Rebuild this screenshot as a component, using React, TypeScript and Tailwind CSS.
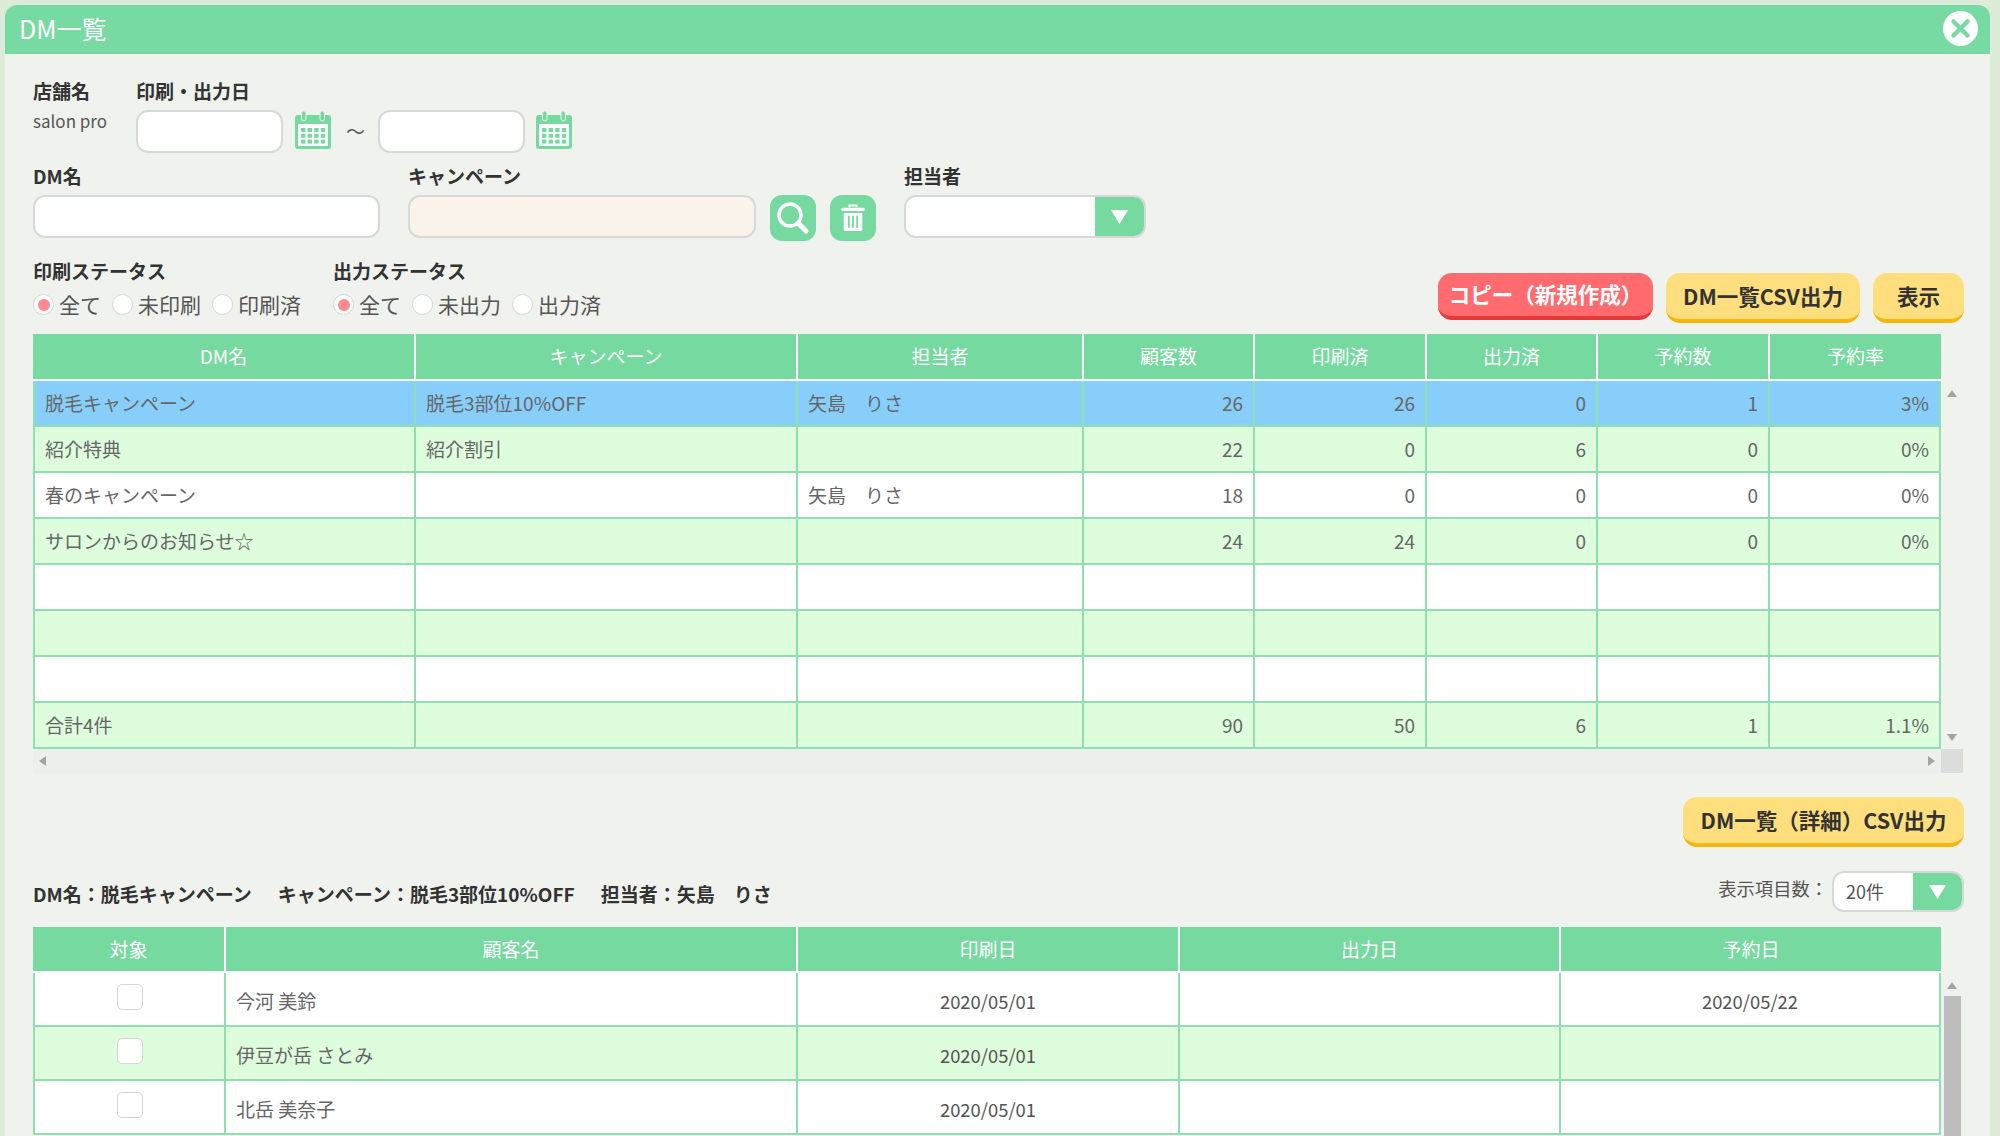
import React from "react";

const font = { fontFamily: '"Noto Sans CJK JP", "Noto Sans", sans-serif' };

function CalendarIcon() {
  const cells = [];
  for (let r = 0; r < 3; r++) for (let c = 0; c < 4; c++) cells.push(<rect key={`${r}-${c}`} x={8 + c * 6.6} y={18 + r * 5.8} width="4.4" height="4" fill="#76d9a0" />);
  return (
    <svg width="40" height="40" viewBox="0 0 40 40" className="shrink-0">
      <path d="M5 5h30a3 3 0 0 1 3 3v28a3 3 0 0 1-3 3H5a3 3 0 0 1-3-3V8a3 3 0 0 1 3-3z" fill="#76d9a0" />
      <rect x="5" y="14" width="30" height="22" rx="1" fill="#fff" />
      {cells}
      <rect x="8.5" y="1" width="4.5" height="10" rx="2.2" fill="#76d9a0" stroke="#eff2ed" strokeWidth="1" />
      <rect x="27" y="1" width="4.5" height="10" rx="2.2" fill="#76d9a0" stroke="#eff2ed" strokeWidth="1" />
    </svg>
  );
}

function Arrow() {
  return (
    <div className="flex h-full w-[49px] shrink-0 items-center justify-center bg-[#76d9a0]">
      <svg width="17" height="14" viewBox="0 0 17 14"><path d="M0 0h17L8.5 14z" fill="#fff" /></svg>
    </div>
  );
}

function Radio({ label, on }: { label: string; on?: boolean }) {
  return (
    <div className="flex items-center gap-[5px]">
      <span className="flex h-[21px] w-[21px] items-center justify-center rounded-full border border-[#d5d5d5] bg-white">
        {on && <span className="h-[12px] w-[12px] rounded-full bg-[#ff8a90]" />}
      </span>
      <span className="text-[21px] leading-none text-[#555]">{label}</span>
    </div>
  );
}

function Label({ children }: { children: React.ReactNode }) {
  return <div className="text-[19px] font-bold leading-[24px] text-[#333]">{children}</div>;
}

function YellowButton({ children, className = "" }: { children: React.ReactNode; className?: string }) {
  return (
    <button className={`flex items-center justify-center rounded-[14px] border-b-[4px] border-[#f5b60c] bg-[#ffde7d] text-[21.5px] font-bold text-[#333] ${className}`}>
      {children}
    </button>
  );
}

const t1Cols = "grid-cols-[383px_382px_286px_171px_172px_171px_172px_171px]";
const t2Cols = "grid-cols-[193px_572px_382px_381px_380px]";

const t1Rows: [string, string, string, string, string, string, string, string][] = [
  ["脱毛キャンペーン", "脱毛3部位10%OFF", "矢島　りさ", "26", "26", "0", "1", "3%"],
  ["紹介特典", "紹介割引", "", "22", "0", "6", "0", "0%"],
  ["春のキャンペーン", "", "矢島　りさ", "18", "0", "0", "0", "0%"],
  ["サロンからのお知らせ☆", "", "", "24", "24", "0", "0", "0%"],
  ["", "", "", "", "", "", "", ""],
  ["", "", "", "", "", "", "", ""],
  ["", "", "", "", "", "", "", ""],
  ["合計4件", "", "", "90", "50", "6", "1", "1.1%"],
];

const t2Rows = [
  ["今河 美鈴", "2020/05/01", "", "2020/05/22"],
  ["伊豆が岳 さとみ", "2020/05/01", "", ""],
  ["北岳 美奈子", "2020/05/01", "", ""],
];

export default function App() {
  return (
    <div style={font} className="h-[1136px] w-[2000px] overflow-hidden bg-[#dcecd8] pl-[5px] pt-[5px]">
      <div className="flex h-[1131px] w-[1985px] flex-col overflow-hidden rounded-t-[12px] bg-[#eff2ed]">
        {/* title bar */}
        <div className="flex h-[49px] shrink-0 items-center justify-between bg-[#78daa3] pl-[14px] pr-[12px]">
          <span className="-mt-[3px] text-[25px] leading-none text-white">DM一覧</span>
          <svg width="35" height="35" viewBox="0 0 35 35" className="-mt-[2px]">
            <circle cx="17.5" cy="17.5" r="17.5" fill="#fff" />
            <path d="M10.5 10.5l14 14M24.5 10.5l-14 14" stroke="#78daa3" strokeWidth="4.5" strokeLinecap="round" />
          </svg>
        </div>

        <div className="flex flex-col pl-[28px] pr-[26px]">
          {/* row 1 */}
          <div className="mt-[25px] flex h-[73px]">
            <div className="w-[103px]">
              <Label>店舗名</Label>
              <div className="mt-[6px] text-[17px] leading-[24px] text-[#555]">salon pro</div>
            </div>
            <div>
              <Label>印刷・出力日</Label>
              <div className="mt-[7px] flex items-center">
                <div className="h-[43px] w-[147px] rounded-[12px] border-2 border-[#d8d8d8] bg-white" />
                <div className="-mt-[3px] ml-[10px]"><CalendarIcon /></div>
                <span className="-mt-[2px] w-[45px] text-center text-[19px] leading-none text-[#555]">～</span>
                <div className="h-[43px] w-[147px] rounded-[12px] border-2 border-[#d8d8d8] bg-white" />
                <div className="-mt-[3px] ml-[9px]"><CalendarIcon /></div>
              </div>
            </div>
          </div>

          {/* row 2 */}
          <div className="mt-[12px] flex h-[69px]">
            <div className="w-[375px]">
              <Label>DM名</Label>
              <div className="mt-[7px] h-[43px] w-[347px] rounded-[12px] border-2 border-[#d8d8d8] bg-white" />
            </div>
            <div className="w-[362px]">
              <Label>キャンペーン</Label>
              <div className="mt-[7px] h-[43px] w-[348px] rounded-[12px] border-2 border-[#d8d8d8] bg-[#f9f3ea]" />
            </div>
            <div className="mt-[31px] flex h-[46px] w-[46px] items-center justify-center rounded-[12px] bg-[#76d9a0]">
              <svg width="40" height="40" viewBox="0 0 40 40">
                <circle cx="17" cy="17" r="11" fill="none" stroke="#fff" strokeWidth="3.5" />
                <path d="M26 26l7 7" stroke="#fff" strokeWidth="5" strokeLinecap="round" />
              </svg>
            </div>
            <div className="ml-[14px] mt-[31px] flex h-[46px] w-[46px] items-center justify-center rounded-[12px] bg-[#76d9a0]">
              <svg width="26" height="28" viewBox="0 0 28 30">
                <path d="M10 3.5V1.5h8v2" fill="none" stroke="#fff" strokeWidth="2" />
                <rect x="1.5" y="4" width="25" height="3.5" rx="1" fill="#fff" />
                <path d="M4 9.5h20V27a2 2 0 0 1-2 2H6a2 2 0 0 1-2-2z" fill="#fff" />
                <path d="M9.5 12.5v13M14 12.5v13M18.5 12.5v13" stroke="#76d9a0" strokeWidth="2" />
              </svg>
            </div>
            <div className="ml-[28px]">
              <Label>担当者</Label>
              <div className="mt-[7px] flex h-[43px] w-[242px] overflow-hidden rounded-[12px] border-2 border-[#d8d8d8] bg-white">
                <div className="flex-1" />
                <Arrow />
              </div>
            </div>
          </div>

          {/* row 3 */}
          <div className="mt-[26px] flex h-[75px] items-start justify-between">
            <div className="flex">
              <div className="w-[300px]">
                <Label>印刷ステータス</Label>
                <div className="mt-[11px] flex gap-[11px]">
                  <Radio label="全て" on />
                  <Radio label="未印刷" />
                  <Radio label="印刷済" />
                </div>
              </div>
              <div>
                <Label>出力ステータス</Label>
                <div className="mt-[11px] flex gap-[11px]">
                  <Radio label="全て" on />
                  <Radio label="未出力" />
                  <Radio label="出力済" />
                </div>
              </div>
            </div>
            <div className="mt-[14px] flex gap-[13px]">
              <button className="flex h-[47px] w-[215px] items-center justify-center rounded-[14px] border-b-[4px] border-[#e63a3a] bg-[#ff6b6f] text-[21.5px] font-bold text-white">
                コピー（新規作成）
              </button>
              <YellowButton className="h-[50px] w-[194px]">DM一覧CSV出力</YellowButton>
              <YellowButton className="h-[50px] w-[91px]">表示</YellowButton>
            </div>
          </div>

          {/* table 1 */}
          <div className="flex w-[1931px]">
            <div className="w-[1908px] shrink-0">
              <div className={`grid h-[47px] ${t1Cols} border-b-2 border-white bg-[#76d9a0]`}>
                {["DM名", "キャンペーン", "担当者", "顧客数", "印刷済", "出力済", "予約数", "予約率"].map((h, i) => (
                  <div key={h} className={`flex items-center justify-center text-[19px] text-white ${i < 7 ? "border-r-2 border-white" : ""}`}>{h}</div>
                ))}
              </div>
              <div>
                {t1Rows.map((row, i) => (
                  <div
                    key={i}
                    className={`grid h-[46px] ${t1Cols} border-b-2 border-[#8fdfb0] ${i === 0 ? "bg-[#87cefa]" : i % 2 === 1 ? "bg-[#ddfddd]" : "bg-white"}`}
                  >
                    {row.map((c, j) => (
                      <div
                        key={j}
                        className={`flex items-center border-r-2 border-[#8fdfb0] text-[19px] text-[#666] ${j === 0 ? "border-l-2" : ""} ${j > 2 ? "justify-end pr-[10px]" : "pl-[10px]"}`}
                      >
                        {c}
                      </div>
                    ))}
                  </div>
                ))}
              </div>
            </div>
            <div className="w-[22px] shrink-0 pt-[56px]">
              <svg width="10" height="7" viewBox="0 0 10 7" className="ml-[6px]"><path d="M5 0l5 7H0z" fill="#a3a3a3" /></svg>
              <svg width="10" height="7" viewBox="0 0 10 7" className="ml-[6px] mt-[337px]"><path d="M5 7l5-7H0z" fill="#a3a3a3" /></svg>
            </div>
          </div>
          {/* horizontal scrollbar */}
          <div className="flex h-[24px] w-[1930px] items-center justify-between">
            <div className="flex h-full w-[1908px] items-center justify-between bg-[#edefec] px-[6px]">
              <svg width="7" height="10" viewBox="0 0 7 10"><path d="M0 5l7 5V0z" fill="#a3a3a3" /></svg>
              <svg width="7" height="10" viewBox="0 0 7 10"><path d="M7 5L0 10V0z" fill="#a3a3a3" /></svg>
            </div>
            <div className="h-full w-[22px] bg-[#dcdcdc]" />
          </div>

          {/* detail csv */}
          <div className="mt-[24px] flex w-[1931px] justify-end">
            <YellowButton className="h-[50px] w-[281px]">DM一覧（詳細）CSV出力</YellowButton>
          </div>

          {/* info row */}
          <div className="mt-[24px] flex h-[41px] w-[1931px] items-center justify-between">
            <div className="mt-[6px] flex gap-[26px] text-[19px] font-bold text-[#333]">
              <span>DM名：脱毛キャンペーン</span>
              <span>キャンペーン：脱毛3部位10%OFF</span>
              <span>担当者：矢島　りさ</span>
            </div>
            <div className="flex items-center gap-[4px]">
              <span className="-mt-[6px] text-[18.3px] text-[#555]">表示項目数：</span>
              <div className="flex h-[41px] w-[132px] overflow-hidden rounded-[12px] border-2 border-[#d8d8d8] bg-white">
                <div className="flex flex-1 items-center pl-[12px] text-[18px] text-[#555]">20件</div>
                <Arrow />
              </div>
            </div>
          </div>

          {/* table 2 */}
          <div className="mt-[15px] flex w-[1931px]">
            <div className="w-[1908px] shrink-0">
              <div className={`grid h-[46px] ${t2Cols} border-b-2 border-white bg-[#76d9a0]`}>
                {["対象", "顧客名", "印刷日", "出力日", "予約日"].map((h, i) => (
                  <div key={h} className={`flex items-center justify-center text-[19px] text-white ${i < 4 ? "border-r-2 border-white" : ""}`}>{h}</div>
                ))}
              </div>
              {t2Rows.map((row, i) => (
                <div key={i} className={`grid h-[54px] ${t2Cols} border-b-2 border-[#8fdfb0] ${i === 1 ? "bg-[#ddfddd]" : "bg-white"}`}>
                  <div className="flex justify-center border-x-2 border-[#8fdfb0] pt-[11px]">
                    <span className="h-[26px] w-[26px] rounded-[5px] border border-[#d5d5d5] bg-white" />
                  </div>
                  <div className="flex items-center border-r-2 border-[#8fdfb0] pl-[10px] pt-[5px] text-[19px] text-[#666]">{row[0]}</div>
                  {row.slice(1).map((c, j) => (
                    <div key={j} className="flex items-center justify-center border-r-2 border-[#8fdfb0] pt-[5px] text-[18.4px] text-[#555]">{c}</div>
                  ))}
                </div>
              ))}
            </div>
            <div className="w-[22px] shrink-0 pt-[55px]">
              <svg width="10" height="7" viewBox="0 0 10 7" className="ml-[6px]"><path d="M5 0l5 7H0z" fill="#a3a3a3" /></svg>
              <div className="ml-[3px] mt-[7px] h-[200px] w-[17px] bg-[#bdbdbd]" />
            </div>
          </div>
        </div>
      </div>
    </div>
  );
}
